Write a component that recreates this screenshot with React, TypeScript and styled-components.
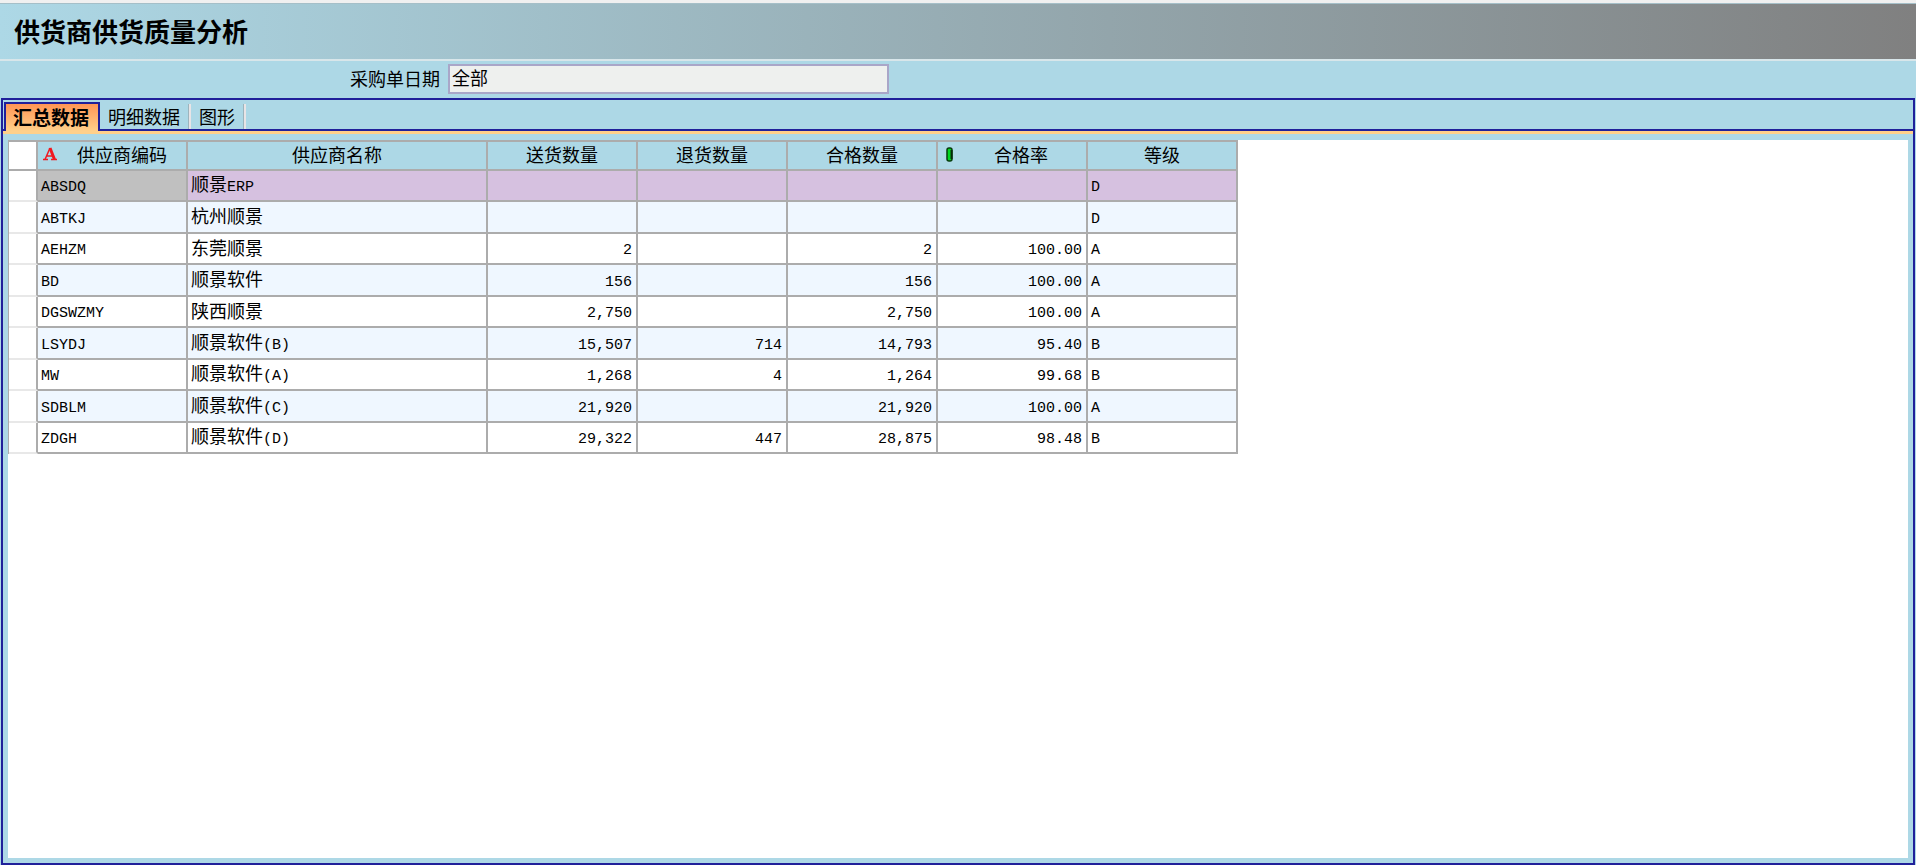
import React from "react";
import styled, { createGlobalStyle } from "styled-components";

const sky = "#add8e6";
const navy = "#20209a";
const line = "#acacac";

const GlobalStyle = createGlobalStyle`
  * { box-sizing: border-box; }
  body {
    margin: 0;
    background: ${sky};
    color: #000;
    font: 18px/24px "Noto Sans CJK SC", sans-serif;
  }
`;

const Page = styled.div`
  display: flex;
  flex-direction: column;
  min-height: 100vh;
  border-top: 3px solid #f0f0f0;
`;

const Header = styled.header`
  display: flex;
  align-items: center;
  height: 58px;
  padding: 0 14px;
  border-top: 1px solid #a5bfc8;
  border-bottom: 2px solid #d8e6ea;
  background: linear-gradient(to right, ${sky}, #808080);
`;

const Title = styled.h1`
  margin: 0;
  padding-bottom: 2px;
  font-size: 26px;
  line-height: 32px;
  font-weight: 700;
`;

const FilterBar = styled.form`
  display: flex;
  align-items: center;
  gap: 8px;
  height: 37px;
  padding: 0 0 2px 350px;
`;

const FilterLabel = styled.label`
  padding-bottom: 2px;
`;

const FilterInput = styled.input`
  width: 441px;
  height: 30px;
  padding: 0 2px 3px;
  border: 2px solid #a9a6c8;
  background: #eef0ee;
  color: #000;
  font: inherit;
  outline: none;
`;

const Panel = styled.main`
  display: flex;
  flex: 1;
  flex-direction: column;
  margin: 0 1px;
  border: 2px solid ${navy};
`;

const TabBar = styled.div`
  display: flex;
  align-items: flex-end;
  height: 34px;
  border-bottom: 3px solid #ffd08a;
  background: linear-gradient(${navy}, ${navy}) bottom / 100% 2px no-repeat;
`;

const Tab = styled.button<{ $active?: boolean }>`
  height: ${(p) => (p.$active ? 29 : 25)}px;
  margin: ${(p) => (p.$active ? "0 0 0 1px" : "0 0 2px")};
  padding: ${(p) => (p.$active ? "0 9px 2px 7px" : "0 9px 2px 8px")};
  border: solid ${(p) => (p.$active ? navy : "#e8e4e6")};
  border-width: ${(p) => (p.$active ? "2px 2px 0" : "0 2px 0 0")};
  background: ${(p) => (p.$active ? "linear-gradient(#ff9554, #ffd08a)" : "transparent")};
  box-shadow: ${(p) => (p.$active ? "none" : "inset -1px 0 #9db4bd")};
  color: #000;
  font: inherit;
  font-size: ${(p) => (p.$active ? 19 : 18)}px;
  font-weight: ${(p) => (p.$active ? 700 : 400)};
`;

const Sheet = styled.section`
  flex: 1;
  margin: 6px 5px 5px;
  background: #fff;
`;

const Grid = styled.table`
  width: 1230px;
  table-layout: fixed;
  border-collapse: separate;
  border-spacing: 0;
  border-top: 2px solid ${line};
  border-left: 1px solid ${line};
`;

const Col = styled.col<{ $w: number }>`
  width: ${(p) => p.$w}px;
`;

const HeadCell = styled.th`
  height: 29px;
  padding: 0 0 3px;
  border: solid ${line};
  border-width: 0 2px 2px 0;
  background: ${sky};
  font-weight: 400;
`;

const HeadLabel = styled.span`
  display: flex;
  align-items: center;
  justify-content: center;
`;

const HeadMark = styled.svg`
  flex: none;
  margin-right: 20px;
`;

const Marker = styled.td`
  padding: 0;
  border: solid #e8e8e8;
  border-width: 0 2px 2px 0;
  border-right-color: ${line};
`;

const Corner = styled(Marker)`
  border-color: ${line};
  background: #fff;
`;

const Cell = styled.td<{ $align?: "right"; $fill?: string }>`
  padding: 0 4px 4px 3px;
  border: solid ${line};
  border-width: 0 2px 2px 0;
  background: ${(p) => p.$fill ?? "transparent"};
  text-align: ${(p) => p.$align ?? "left"};
  white-space: nowrap;
`;

const Row = styled.tr<{ $selected: boolean }>`
  height: 31px;
  background: ${(p) => (p.$selected ? "#d6c1e0" : "#fff")};
  &:nth-child(even) {
    height: 32px;
    background: #eff7ff;
  }
  ${Marker} { background: #fff; }
`;

const Mono = styled.span`
  font: 15px/16px "Liberation Mono", monospace;
`;

const columns = ["供应商编码", "供应商名称", "送货数量", "退货数量", "合格数量", "合格率", "等级"];
const widths = [29, 150, 300, 150, 150, 150, 150, 150];

const rows = [
  ["ABSDQ", "顺景", "ERP", "", "", "", "", "D"],
  ["ABTKJ", "杭州顺景", "", "", "", "", "", "D"],
  ["AEHZM", "东莞顺景", "", "2", "", "2", "100.00", "A"],
  ["BD", "顺景软件", "", "156", "", "156", "100.00", "A"],
  ["DGSWZMY", "陕西顺景", "", "2,750", "", "2,750", "100.00", "A"],
  ["LSYDJ", "顺景软件", "(B)", "15,507", "714", "14,793", "95.40", "B"],
  ["MW", "顺景软件", "(A)", "1,268", "4", "1,264", "99.68", "B"],
  ["SDBLM", "顺景软件", "(C)", "21,920", "", "21,920", "100.00", "A"],
  ["ZDGH", "顺景软件", "(D)", "29,322", "447", "28,875", "98.48", "B"],
];

const SortMark = () => (
  <HeadMark width="14" height="14" viewBox="0 0 14 14" aria-hidden="true">
    <path d="M7 1 L2 12.5 M4 9 H9" stroke="#f01820" strokeWidth="1.5" fill="none" />
    <path d="M7 1 L11.5 12.5" stroke="#f01820" strokeWidth="3" />
    <path d="M0 12.5 H5 M8 12.5 H14" stroke="#f01820" strokeWidth="1.5" />
  </HeadMark>
);

const RateMark = () => (
  <HeadMark width="7" height="15" viewBox="0 0 7 15" aria-hidden="true">
    <rect x="1" y="1" width="5" height="13" rx="2" fill="#00d820" stroke="#063c0c" strokeWidth="1.5" />
    <path d="M5.5 3 V12" stroke="#042c08" strokeWidth="2" />
  </HeadMark>
);

const RateHead = styled(HeadLabel)`
  justify-content: flex-start;
  padding-left: 8px;
  ${HeadMark} { margin-right: 41px; }
`;

const CodeHead = styled(HeadLabel)`
  justify-content: flex-start;
  padding-left: 5px;
`;

export default function App() {
  return (
    <Page>
      <GlobalStyle />
      <Header>
        <Title>供货商供货质量分析</Title>
      </Header>
      <FilterBar>
        <FilterLabel htmlFor="order-date">采购单日期</FilterLabel>
        <FilterInput id="order-date" defaultValue="全部" />
      </FilterBar>
      <Panel>
        <TabBar role="tablist">
          <Tab role="tab" aria-selected $active>汇总数据</Tab>
          <Tab role="tab">明细数据</Tab>
          <Tab role="tab">图形</Tab>
        </TabBar>
        <Sheet>
          <Grid>
            <colgroup>
              {widths.map((w, i) => <Col key={i} $w={w} />)}
            </colgroup>
            <thead>
              <tr>
                <Corner />
                {columns.map((name, i) => {
                  const Label = i === 0 ? CodeHead : i === 5 ? RateHead : HeadLabel;
                  return (
                    <HeadCell key={name} scope="col">
                      <Label>
                        {i === 0 && <SortMark />}
                        {i === 5 && <RateMark />}
                        {name}
                      </Label>
                    </HeadCell>
                  );
                })}
              </tr>
            </thead>
            <tbody>
              {rows.map(([code, name, suffix, ...rest], i) => (
                <Row key={code} $selected={i === 0}>
                  <Marker />
                  <Cell $fill={i === 0 ? "#c0c0c0" : undefined}><Mono>{code}</Mono></Cell>
                  <Cell>{name}{suffix && <Mono>{suffix}</Mono>}</Cell>
                  {rest.map((value, j) => (
                    <Cell key={j} $align={j < 4 ? "right" : undefined}><Mono>{value}</Mono></Cell>
                  ))}
                </Row>
              ))}
            </tbody>
          </Grid>
        </Sheet>
      </Panel>
    </Page>
  );
}
